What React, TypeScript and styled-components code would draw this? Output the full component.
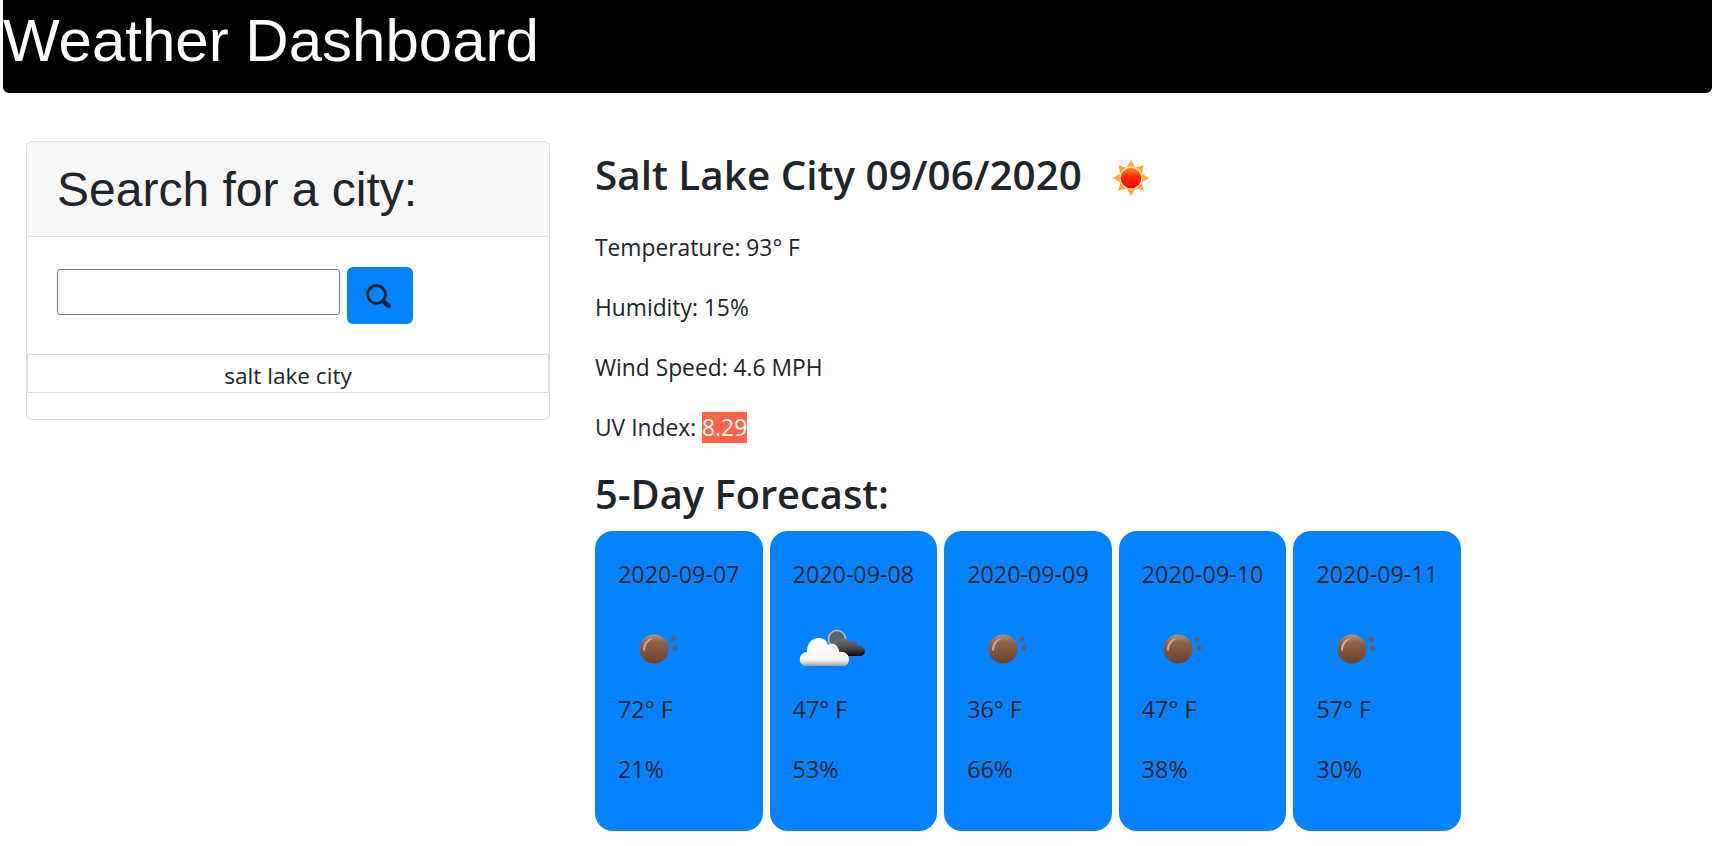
import React from "react"
import styled, { createGlobalStyle } from "styled-components"

const GlobalStyle = createGlobalStyle`
  * {
    box-sizing: border-box;
  }

  body {
    margin: 0;
    background: #fff;
    color: #212529;
    font-family: "Open Sans", sans-serif;
    font-size: 22.8px;
    line-height: 36px;
  }
`

const Header = styled.header`
  height: 93px;
  margin: 0 5px 0 3px;
  background: #000;
  border-radius: 0 0 6px 6px;
  color: #fff;
  font-family: "Liberation Sans", Arial, sans-serif;
  font-size: 60px;
  line-height: 82px;
`

const Page = styled.main`
  display: flex;
  align-items: flex-start;
  gap: 45px;
  padding: 48px 0 0 26px;
`

const SearchCard = styled.aside`
  width: 524px;
  height: 279px;
  flex: none;
  border: 1.5px solid #dfdfdf;
  border-radius: 6px;
`

const SearchHeader = styled.h2`
  height: 95px;
  margin: 0;
  padding: 0 30px;
  background: #f7f7f7;
  border-bottom: 1.5px solid #dfdfdf;
  border-radius: 5px 5px 0 0;
  font-family: "Liberation Sans", Arial, sans-serif;
  font-size: 48px;
  font-weight: 400;
  line-height: 96px;
`

const SearchForm = styled.form`
  display: flex;
  align-items: flex-start;
  gap: 7px;
  height: 117px;
  padding: 30px 30px 0;
`

const CityInput = styled.input`
  width: 283px;
  height: 46px;
  margin-top: 2px;
  background: #fff;
  border: 1.5px solid #767676;
  border-radius: 3px;
`

const SearchButton = styled.button`
  display: flex;
  align-items: center;
  justify-content: center;
  width: 66px;
  height: 57px;
  padding: 1px 4px 0 0;
  background: #0582ff;
  border: 0;
  border-radius: 6px;
  color: #212529;
`

const HistoryItem = styled.div`
  height: 39px;
  border: 1.5px solid #dfdfdf;
  font-size: 22.6px;
  line-height: 42px;
  text-align: center;
`

const Report = styled.section`
  flex: 1;
  padding-top: 4px;
`

const CityTitle = styled.h2`
  display: flex;
  align-items: center;
  gap: 30px;
  height: 60px;
  margin: 0 0 25px;
  font-size: 40.4px;
  font-weight: 600;
  line-height: 60px;
`

const SunSvg = styled.svg`
  margin-top: 5px;
`

const Stat = styled.p`
  margin: 0 0 24px;
`

const UvBadge = styled.span`
  background: #ff6347;
  color: #fff;
`

const ForecastTitle = styled.h2`
  margin: -4px 0 9px;
  font-size: 39.8px;
  font-weight: 600;
  line-height: 56px;
`

const ForecastRow = styled.div`
  display: flex;
  gap: 7px;
`

const DayCard = styled.article`
  width: 167.6px;
  height: 300px;
  padding: 25px 0 0 23px;
  background: #0582ff;
  border-radius: 18px;
  font-size: 23.3px;
`

const DayLine = styled.p`
  margin: 0 0 24px;
  white-space: nowrap;
`

const IconSlot = styled.div<{ $inset: number }>`
  display: flex;
  align-items: center;
  height: 63px;
  margin-bottom: 11.5px;
  padding-left: ${(p) => p.$inset}px;
`

function SearchIcon() {
  return (
    <svg width="27" height="27" viewBox="0 0 27 27" fill="none" aria-hidden="true">
      <circle cx="11.5" cy="11.5" r="9" stroke="#212529" strokeWidth="2.8" />
      <path d="M18.5 18.5l5 4.2" stroke="#212529" strokeWidth="4.6" strokeLinecap="round" />
    </svg>
  )
}

function SunIcon() {
  const rays = [0, 45, 90, 135, 180, 225, 270, 315]
  return (
    <SunSvg width="38" height="38" viewBox="0 0 38 38" aria-hidden="true">
      <defs>
        <linearGradient id="sunCore" x1="0" y1="0" x2="0" y2="1">
          <stop offset="0" stopColor="#ff9a2e" />
          <stop offset="0.45" stopColor="#ff2a00" />
          <stop offset="1" stopColor="#f50000" />
        </linearGradient>
      </defs>
      {rays.map((angle) => (
        <path key={angle} d="M19 1l4.4 7.5h-8.8z" fill="#ffa733" transform={`rotate(${angle} 19 19)`} />
      ))}
      <circle cx="19" cy="19" r="11" fill="url(#sunCore)" stroke="#ffe0a6" strokeWidth="1.4" />
    </SunSvg>
  )
}

function HazeIcon() {
  return (
    <svg width="42" height="36" viewBox="0 0 42 36" aria-hidden="true">
      <defs>
        <linearGradient id="hazeBall" x1="0" y1="0" x2="0" y2="1">
          <stop offset="0" stopColor="#b79378" />
          <stop offset="0.3" stopColor="#8d6044" />
          <stop offset="1" stopColor="#69432b" />
        </linearGradient>
      </defs>
      <circle cx="17" cy="19" r="14.5" fill="url(#hazeBall)" />
      <path d="M6 20c0-7 4-11 10-12-5 3-8 7-8 13z" fill="#e6cfbe" opacity="0.7" />
      <circle cx="36" cy="9" r="2.6" fill="#75564c" />
      <circle cx="38" cy="18" r="2.4" fill="#75564c" />
    </svg>
  )
}

function CloudIcon() {
  return (
    <svg width="66" height="38" viewBox="0 0 66 38" aria-hidden="true">
      <defs>
        <linearGradient id="darkCloud" x1="0" y1="0" x2="0" y2="1">
          <stop offset="0" stopColor="#707070" />
          <stop offset="0.6" stopColor="#454545" />
          <stop offset="1" stopColor="#050505" />
        </linearGradient>
        <linearGradient id="lightCloud" x1="0" y1="0" x2="0" y2="1">
          <stop offset="0" stopColor="#ffffff" />
          <stop offset="0.78" stopColor="#f6f6f6" />
          <stop offset="1" stopColor="#a0a0a0" />
        </linearGradient>
      </defs>
      <circle cx="38" cy="10" r="8.5" fill="#5d6670" stroke="#bdbdbd" strokeWidth="1.6" />
      <path
        d="M39 27c-4 0-5-11-1-13 2-5 9-6 11-2 4-2 9 0 9 5 5-1 8 2 8 5 0 3-2 5-5 5z"
        fill="url(#darkCloud)"
      />
      <path
        d="M7 37c-8 0-9-13 1-14 0-7 3-14 12-14 5 0 8 3 9 7 3-2 8-2 10 3 1 1 1 3 1 4 6-1 10 3 10 7 0 4-2 7-5 7z"
        fill="url(#lightCloud)"
      />
    </svg>
  )
}

const forecast = [
  { date: "2020-09-07", temp: "72° F", humidity: "21%", icon: "haze" },
  { date: "2020-09-08", temp: "47° F", humidity: "53%", icon: "cloud" },
  { date: "2020-09-09", temp: "36° F", humidity: "66%", icon: "haze" },
  { date: "2020-09-10", temp: "47° F", humidity: "38%", icon: "haze" },
  { date: "2020-09-11", temp: "57° F", humidity: "30%", icon: "haze" },
]

export default function App() {
  return (
    <>
      <GlobalStyle />
      <Header>Weather Dashboard</Header>
      <Page>
        <SearchCard>
          <SearchHeader>Search for a city:</SearchHeader>
          <SearchForm onSubmit={(e) => e.preventDefault()}>
            <CityInput type="text" aria-label="City" />
            <SearchButton type="submit" aria-label="Search">
              <SearchIcon />
            </SearchButton>
          </SearchForm>
          <HistoryItem>salt lake city</HistoryItem>
        </SearchCard>
        <Report>
          <CityTitle>
            Salt Lake City 09/06/2020
            <SunIcon />
          </CityTitle>
          <Stat>Temperature: 93° F</Stat>
          <Stat>Humidity: 15%</Stat>
          <Stat>Wind Speed: 4.6 MPH</Stat>
          <Stat>
            UV Index: <UvBadge>8.29</UvBadge>
          </Stat>
          <ForecastTitle>5-Day Forecast:</ForecastTitle>
          <ForecastRow>
            {forecast.map((day) => (
              <DayCard key={day.date}>
                <DayLine>{day.date}</DayLine>
                <IconSlot $inset={day.icon === "cloud" ? 6 : 19}>
                  {day.icon === "cloud" ? <CloudIcon /> : <HazeIcon />}
                </IconSlot>
                <DayLine>{day.temp}</DayLine>
                <DayLine>{day.humidity}</DayLine>
              </DayCard>
            ))}
          </ForecastRow>
        </Report>
      </Page>
    </>
  )
}
